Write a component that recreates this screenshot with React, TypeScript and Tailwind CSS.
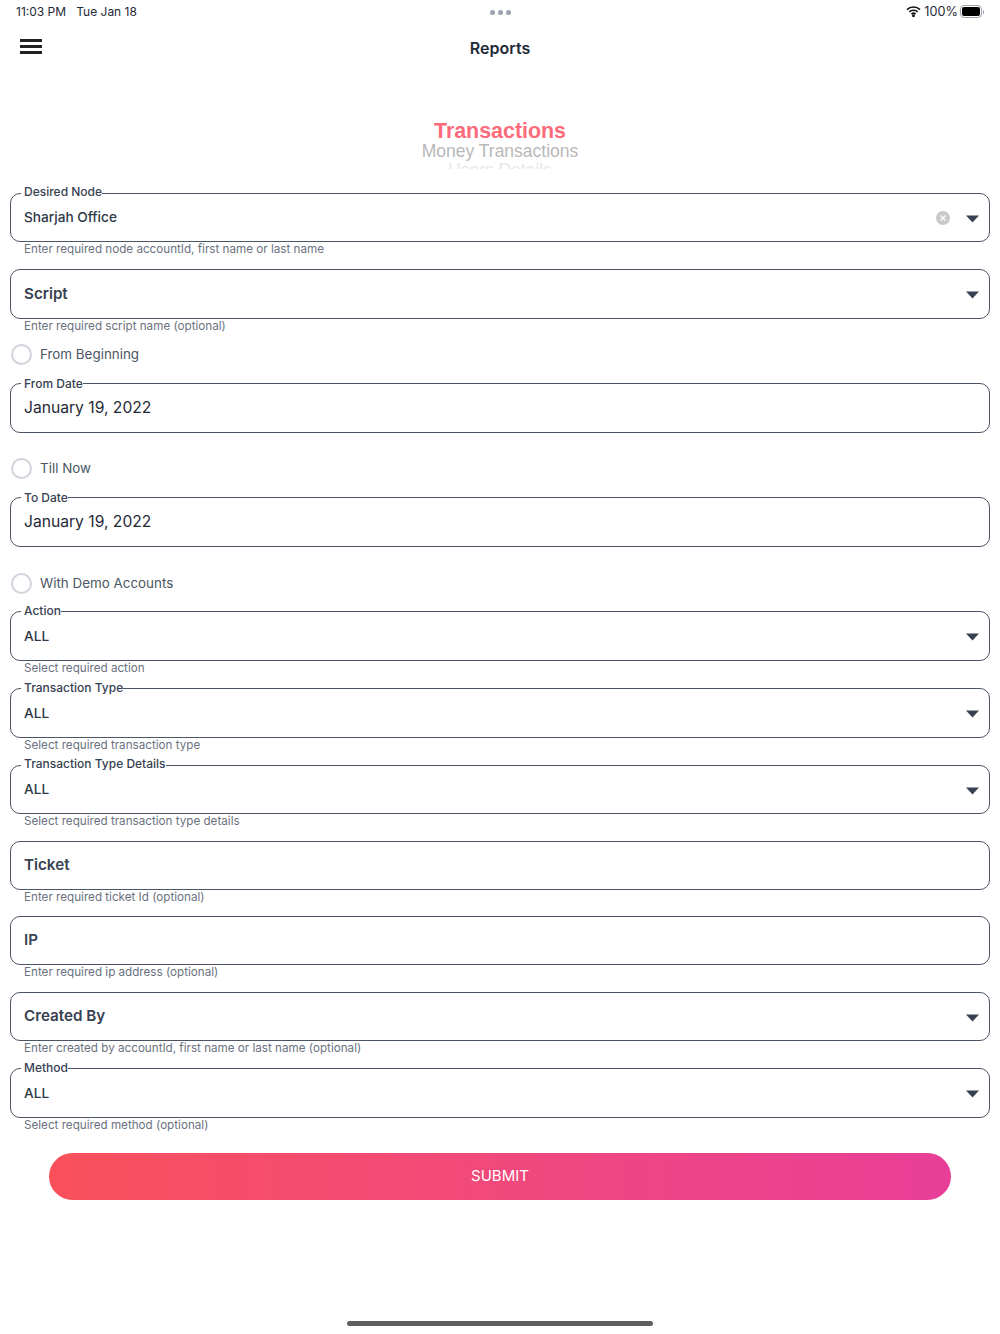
import { ReactNode } from 'react'

type BoxProps = { label?: string; legendTop?: string; value: string; strong?: boolean; caret?: boolean; clear?: boolean; h?: string }

function Caret() {
  return (
    <svg width="13" height="8" viewBox="0 0 13 8" className="mt-[2px] shrink-0">
      <path d="M0 0.5h13L6.5 7.5z" fill="#374151" />
    </svg>
  )
}

function Legend({ label, top = 'top-[-9px]' }: { label: string; top?: string }) {
  return (
    <span className={`absolute left-[10px] bg-white pl-[3px] text-[12px] leading-[16px] font-medium text-[#374151] ${top}`}>{label}</span>
  )
}

function Box({ label, legendTop, value, strong, caret, clear, h = 'h-[50px]' }: BoxProps) {
  return (
    <div className={`relative flex items-center rounded-[10px] border border-[#4b5563] pl-[13px] pr-[10px] ${h}`}>
      {label && <Legend label={label} top={legendTop} />}
      <span className={`flex-1 ${strong ? 'text-[15.2px] font-semibold text-[#374151]' : 'text-[13.65px] font-medium text-[#2f3845]'}`}>{value}</span>
      {clear && (
        <span className="mr-[16px] flex h-[14px] w-[14px] items-center justify-center rounded-full bg-[#c8c9cb]">
          <svg width="8" height="8" viewBox="0 0 8 8"><path d="M1.5 1.5l5 5M6.5 1.5l-5 5" stroke="#fff" strokeWidth="1.2" /></svg>
        </span>
      )}
      {caret && <Caret />}
    </div>
  )
}

function Field({ helper, mb = 'mb-[12px]', ...box }: BoxProps & { helper: string; mb?: string }) {
  return (
    <div className={mb}>
      <Box {...box} />
      <p className="h-[14px] pl-[14px] text-[11.67px] leading-[15px] text-[#6b7280]">{helper}</p>
    </div>
  )
}

function DateBox({ label }: { label: string }) {
  return (
    <div className="relative flex h-[50px] items-center rounded-[10px] border border-[#4b5563] pl-[13px]">
      <Legend label={label} top="top-[-8px]" />
      <span className="text-[15.65px] text-[#1f2937]">January 19, 2022</span>
    </div>
  )
}

function Radio({ className, children }: { className: string; children: ReactNode }) {
  return (
    <div className={`flex h-[22px] items-center gap-[8px] pl-px ${className}`}>
      <span className="h-[21px] w-[21px] rounded-full border-2 border-[#d1d5db]" />
      <span className="text-[13.4px] text-[#4b5563]">{children}</span>
    </div>
  )
}

export default function App() {
  return (
    <div className="flex h-[1334px] flex-col overflow-hidden bg-white font-['Inter','Liberation_Sans',sans-serif]">
      {/* status bar */}
      <div className="relative flex h-[24px] items-center justify-between pl-[16px] pr-[16px] text-[12px] text-[#1f2937]">
        <span className="whitespace-pre">11:03 PM   Tue Jan 18</span>
        <div className="absolute left-[490px] top-[10px] flex gap-[3px]">
          <span className="h-[5px] w-[5px] rounded-full bg-[#9ca3af]" />
          <span className="h-[5px] w-[5px] rounded-full bg-[#9ca3af]" />
          <span className="h-[5px] w-[5px] rounded-full bg-[#9ca3af]" />
        </div>
        <div className="flex items-center">
          <svg width="15" height="11" viewBox="0 0 15 11" fill="none" stroke="#111" strokeWidth="1.7" className="mr-[3px]">
            <path d="M1 3.6a9.4 9.4 0 0 1 13 0" />
            <path d="M3.3 5.9a6.2 6.2 0 0 1 8.4 0" />
            <path d="M5.5 8.1a3 3 0 0 1 4 0" />
            <circle cx="7.5" cy="9.7" r="0.6" fill="#111" />
          </svg>
          <span className="mr-[2px] text-[12.7px]">100%</span>
          <div className="flex items-center">
            <div className="h-[13px] w-[22px] rounded-[4px] border border-[#9ca3af] p-px">
              <div className="h-full rounded-[2px] bg-black" />
            </div>
            <div className="ml-px h-[4px] w-px rounded-r bg-[#9ca3af]" />
          </div>
        </div>
      </div>

      {/* header */}
      <div className="relative flex h-[48px] items-center justify-center">
        <div className="absolute left-[20px] top-[15px] flex w-[22px] flex-col gap-[3px]">
          <span className="h-[3px] bg-[#222]" />
          <span className="h-[3px] bg-[#222]" />
          <span className="h-[3px] bg-[#222]" />
        </div>
        <h1 className="text-[16px] font-semibold text-[#1f2937]">Reports</h1>
      </div>

      {/* wheel picker */}
      <div className="mt-[46px] flex h-[51px] flex-col items-center overflow-hidden font-['Liberation_Sans',sans-serif]">
        <span className="text-[21.4px] leading-[26px] font-bold text-[#fb6b7b]">Transactions</span>
        <span className="-mt-[3px] text-[17.5px] leading-[20px] text-[#b8b8b8]">Money Transactions</span>
        <span className="text-[17.4px] leading-[16px] text-[#e6e6e6]">Users Details</span>
      </div>

      {/* form */}
      <div className="mt-[24px] px-[10px]">
        <Field label="Desired Node" legendTop="top-[-10px]" value="Sharjah Office" caret clear h="h-[49px]" helper="Enter required node accountId, first name or last name" mb="mb-[13px]" />
        <Field value="Script" strong caret helper="Enter required script name (optional)" mb="mb-[10px]" />
        <Radio className="mb-[18px]">From Beginning</Radio>
        <DateBox label="From Date" />
        <Radio className="mb-[18px] mt-[24px]">Till Now</Radio>
        <DateBox label="To Date" />
        <Radio className="mb-[17px] mt-[25px]">With Demo Accounts</Radio>
        <Field label="Action" value="ALL" caret helper="Select required action" mb="mb-[13px]" />
        <Field label="Transaction Type" value="ALL" caret helper="Select required transaction type" mb="mb-[13px]" />
        <Field label="Transaction Type Details" legendTop="top-[-10px]" value="ALL" caret h="h-[49px]" helper="Select required transaction type details" mb="mb-[13px]" />
        <Field value="Ticket" strong h="h-[49px]" helper="Enter required ticket Id (optional)" />
        <Field value="IP" strong h="h-[49px]" helper="Enter required ip address (optional)" mb="mb-[13px]" />
        <Field value="Created By" strong caret h="h-[49px]" helper="Enter created by accountId, first name or last name (optional)" mb="mb-[13px]" />
        <Field label="Method" value="ALL" caret helper="Select required method (optional)" mb="mb-0" />
      </div>

      <button className="mx-[49px] mt-[21px] h-[47px] rounded-full bg-gradient-to-r from-[#f9505a] to-[#e83e98] pb-px text-[15px] text-white">SUBMIT</button>

      {/* home indicator */}
      <div className="mx-auto mb-[8px] mt-auto h-[5px] w-[306px] rounded-full bg-[#5f5f5f]" />
    </div>
  )
}
